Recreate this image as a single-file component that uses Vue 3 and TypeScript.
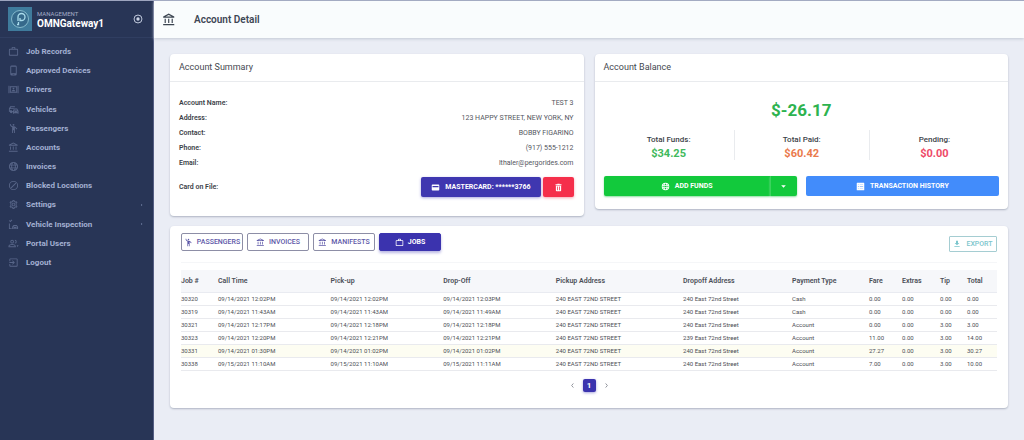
<script setup lang="ts">
interface NavItem {
  label: string
  icon: string
  expandable?: boolean
}

interface Job {
  id: string
  call: string
  pickup: string
  dropoff: string
  from: string
  to: string
  payment: string
  fare: string
  extras: string
  tip: string
  total: string
  active?: boolean
}

const icons = {
  bank: 'M6.500 10h-2v7h2v-7zM12.500 10h-2v7h2v-7zM21 19H2v2h19v-2zM18.500 10h-2v7h2v-7zM11.500 3.260L16.710 6H6.290l5.210-2.740M11.500 1L2 6v2h19V6l-9.500-5z',
  briefcase: 'M20 6h-4V4a2 2 0 0 0-2-2h-4a2 2 0 0 0-2 2v2H4a2 2 0 0 0-2 2v11a2 2 0 0 0 2 2h16a2 2 0 0 0 2-2V8a2 2 0 0 0-2-2zM10 4h4v2h-4V4zm10 15H4V8h16v11z',
  device: 'M16 1H8a3 3 0 0 0-3 3v16a3 3 0 0 0 3 3h8a3 3 0 0 0 3-3V4a3 3 0 0 0-3-3zm1 17H7V4h10v14zm-3 3h-4v-1h4v1z',
  drivers: 'M1 4h2v16H1V4zm20 0h2v16h-2V4zM4 5h16v14H4V5zm2 2v10h12V7H6zm6 1a2 2 0 1 1 0 4 2 2 0 0 1 0-4zm-4 8c0-2 2-3 4-3s4 1 4 3H8z',
  vehicles: 'M15 5H5L2 10v7h2a3 3 0 0 0 6 0h1v-2H9a3 3 0 0 0-5 0v-4h9V9H5l1.500-2H15V5zm5 5h-7l-2 5v6h2v-1h8v1h2v-6l-3-5zm-6 2h5l1 2h-7l1-2zm0 6a1 1 0 1 1 0-2 1 1 0 0 1 0 2zm6 0a1 1 0 1 1 0-2 1 1 0 0 1 0 2z',
  person: 'M12 2a2 2 0 1 0 0 4 2 2 0 0 0 0-4zM15.890 8.110C15.500 7.720 14.830 7 13.530 7H11C8.240 7 6 4.750 6 2H4c0 3.160 2.110 5.840 5 6.710V22h2v-6h2v6h2V10.050L18.950 14l1.410-1.410-4.470-4.480z',
  globe: 'M12 2a10 10 0 1 0 0 20 10 10 0 0 0 0-20zm0 2c1 0 2 2 2.500 4h-5C10 6 11 4 12 4zM8 5.500L7.300 8H5.500A8 8 0 0 1 8 5.500zm8 0A8 8 0 0 1 18.500 8h-1.800L16 5.500zM4.500 10H7v4H4.500a8 8 0 0 1 0-4zM9 10h6v4H9v-4zm8 0h2.500a8 8 0 0 1 0 4H17v-4zM5.500 16h1.800l.7 2.500A8 8 0 0 1 5.500 16zm4 0h5c-.5 2-1.500 4-2.500 4s-2-2-2.500-4zm7.200 0h1.800a8 8 0 0 1-2.500 2.500l.7-2.500z',
  blocked: 'M12 2a10 10 0 1 0 0 20 10 10 0 0 0 0-20zm0 2a8 8 0 1 1 0 16 8 8 0 0 1 0-16zM16.500 6L18 7.500 7.500 18 6 16.500 16.500 6z',
  gear: 'M12 8a4 4 0 1 0 0 8 4 4 0 0 0 0-8zm0 2a2 2 0 1 1 0 4 2 2 0 0 1 0-4zM10 2l-.5 2.700-1.600 1L5.300 4.700l-2 3.500 2.100 1.700v4.200l-2.100 1.700 2 3.500 2.600-1 1.600 1L10 22h4l.5-2.700 1.600-1 2.600 1 2-3.500-2.100-1.700V9.900l2.100-1.700-2-3.500-2.600 1-1.600-1L14 2h-4zm1.700 2h.6l.4 2.200L16 8l2-.7.3.500-1.700 1.400.4 2.800-.4 2.800 1.700 1.400-.3.500-2-.7-3.300 1.800-.4 2.200h-.6l-.4-2.200L8 16l-2 .7-.3-.5 1.700-1.400L7 12l.4-2.800-1.700-1.400.3-.5 2 .7 3.300-1.800.4-2.200z',
  inspection: 'M2 4l1.500-1.500L5 4l3-3 1.500 1.500L5 7 2 4zm0 6h2v10h4v2H2V10zm10 3h7l3 4v5h-2v-1h-9v1H9v-5l3-4zm1 2l-1 2h8l-1.500-2H13zm-1 5a1 1 0 1 0 0-2 1 1 0 0 0 0 2zm7 0a1 1 0 1 0 0-2 1 1 0 0 0 0 2z',
  users: 'M9 4a4 4 0 1 0 0 8 4 4 0 0 0 0-8zm0 2a2 2 0 1 1 0 4 2 2 0 0 1 0-4zm6-2v2a2 2 0 1 1 0 4v2a4 4 0 1 0 0-8zM9 13c-3 0-8 1.500-8 4.500V20h16v-2.500C17 14.500 12 13 9 13zm0 2c2.500 0 6 1.200 6 2.500v.5H3v-.5C3 16.200 6.500 15 9 15zm10 1h4l-2 4-2-4z',
  logout: 'M19 3H5a2 2 0 0 0-2 2v4h2V5h14v14H5v-4H3v4a2 2 0 0 0 2 2h14a2 2 0 0 0 2-2V5a2 2 0 0 0-2-2zm-9 4l-1 1.500 2.500 2.500H3v2h8.500L9 15.500l1 1.500 5-5-5-5z',
  card: 'M20 4H4a2 2 0 0 0-2 2v12a2 2 0 0 0 2 2h16a2 2 0 0 0 2-2V6a2 2 0 0 0-2-2zM4 11V8h16v3H4z',
  trash: 'M9 2v1H4v3h16V3h-5V2H9zM5 7v13a2 2 0 0 0 2 2h10a2 2 0 0 0 2-2V7H5zm3 2h2v10H8V9zm6 0h2v10h-2V9z',
  grid: 'M3 2h18a1 1 0 0 1 1 1v18a1 1 0 0 1-1 1H3a1 1 0 0 1-1-1V3a1 1 0 0 1 1-1zm2 5v1h3V7H5zm5 0v1h9V7h-9zm-5 5v1h3v-1H5zm5 0v1h9v-1h-9zm-5 5v1h3v-1H5zm5 0v1h9v-1h-9z',
  download: 'M9 2h6v7h4l-7 7-7-7h4V2zM4 19h16v2H4v-2z',
}

const nav: NavItem[] = [
  { label: 'Job Records', icon: icons.briefcase },
  { label: 'Approved Devices', icon: icons.device },
  { label: 'Drivers', icon: icons.drivers },
  { label: 'Vehicles', icon: icons.vehicles },
  { label: 'Passengers', icon: icons.person },
  { label: 'Accounts', icon: icons.bank },
  { label: 'Invoices', icon: icons.globe },
  { label: 'Blocked Locations', icon: icons.blocked },
  { label: 'Settings', icon: icons.gear, expandable: true },
  { label: 'Vehicle Inspection', icon: icons.inspection, expandable: true },
  { label: 'Portal Users', icon: icons.users },
  { label: 'Logout', icon: icons.logout },
]

const details = [
  { term: 'Account Name:', value: 'TEST 3' },
  { term: 'Address:', value: '123 HAPPY STREET, NEW YORK, NY' },
  { term: 'Contact:', value: 'BOBBY FIGARINO' },
  { term: 'Phone:', value: '(917) 555-1212' },
  { term: 'Email:', value: 'lthaler@pergorides.com' },
]

const totals = [
  { label: 'Total Funds:', value: '$34.25', tone: 'green' },
  { label: 'Total Paid:', value: '$60.42', tone: 'orange' },
  { label: 'Pending:', value: '$0.00', tone: 'red' },
]

const tabs = [
  { label: 'PASSENGERS', icon: icons.person },
  { label: 'INVOICES', icon: icons.bank },
  { label: 'MANIFESTS', icon: icons.bank },
  { label: 'JOBS', icon: icons.briefcase, active: true },
]

const columns = [
  { label: 'Job #', size: 'c-id' },
  { label: 'Call Time', size: 'c-time' },
  { label: 'Pick-up', size: 'c-time' },
  { label: 'Drop-Off', size: 'c-time' },
  { label: 'Pickup Address', size: 'c-from' },
  { label: 'Dropoff Address', size: 'c-to' },
  { label: 'Payment Type', size: 'c-pay' },
  { label: 'Fare', size: 'c-fare' },
  { label: 'Extras', size: 'c-extras' },
  { label: 'Tip', size: 'c-tip' },
  { label: 'Total', size: 'c-total' },
]

const street = '240 EAST 72ND STREET'
const jobs: Job[] = [
  { id: '30320', call: '09/14/2021 12:02PM', pickup: '09/14/2021 12:02PM', dropoff: '09/14/2021 12:03PM', from: street, to: '240 East 72nd Street', payment: 'Cash', fare: '0.00', extras: '0.00', tip: '0.00', total: '0.00' },
  { id: '30319', call: '09/14/2021 11:43AM', pickup: '09/14/2021 11:43AM', dropoff: '09/14/2021 11:49AM', from: street, to: '240 East 72nd Street', payment: 'Cash', fare: '0.00', extras: '0.00', tip: '0.00', total: '0.00' },
  { id: '30321', call: '09/14/2021 12:17PM', pickup: '09/14/2021 12:18PM', dropoff: '09/14/2021 12:18PM', from: street, to: '240 East 72nd Street', payment: 'Account', fare: '0.00', extras: '0.00', tip: '3.00', total: '3.00' },
  { id: '30323', call: '09/14/2021 12:20PM', pickup: '09/14/2021 12:21PM', dropoff: '09/14/2021 12:21PM', from: street, to: '239 East 72nd Street', payment: 'Account', fare: '11.00', extras: '0.00', tip: '3.00', total: '14.00' },
  { id: '30331', call: '09/14/2021 01:30PM', pickup: '09/14/2021 01:02PM', dropoff: '09/14/2021 01:02PM', from: street, to: '240 East 72nd Street', payment: 'Account', fare: '27.27', extras: '0.00', tip: '3.00', total: '30.27', active: true },
  { id: '30338', call: '09/15/2021 11:10AM', pickup: '09/15/2021 11:10AM', dropoff: '09/15/2021 11:11AM', from: street, to: '240 East 72nd Street', payment: 'Account', fare: '7.00', extras: '0.00', tip: '3.00', total: '10.00' },
]
</script>

<template>
  <div class="app">
    <aside class="sidebar">
      <div class="brand">
        <svg class="logo" viewBox="0 0 24 24" aria-hidden="true">
          <rect width="24" height="24" fill="#3f7b9c" />
          <circle cx="12" cy="12" r="8.500" fill="#35698b" stroke="#84b9cc" stroke-width="1" />
          <path d="M10 14V10a3.500 3.500 0 1 1 3.500 3.500H12V11M9 17.500h1.500V15" fill="none" stroke="#a9dcec" stroke-width="1.300" />
        </svg>
        <div class="brand-text">
          <span class="brand-over">MANAGEMENT</span>
          <span class="brand-name">OMNGateway1</span>
        </div>
        <button class="pin" type="button" aria-label="Collapse menu">
          <svg viewBox="0 0 24 24">
            <circle cx="12" cy="12" r="9.500" fill="none" stroke="currentColor" stroke-width="2.200" />
            <circle cx="12" cy="12" r="4" fill="currentColor" />
          </svg>
        </button>
      </div>
      <nav>
        <a v-for="item in nav" :key="item.label" href="#" class="nav-item">
          <svg class="nav-icon" viewBox="0 0 24 24"><path :d="item.icon" fill-rule="evenodd" /></svg>
          <span>{{ item.label }}</span>
          <svg v-if="item.expandable" class="nav-more" viewBox="0 0 4 4"><path d="M1 1l1.500 1L1 3z" /></svg>
        </a>
      </nav>
    </aside>

    <div class="page">
      <header class="topbar">
        <svg class="top-icon" viewBox="0 0 24 24"><path :d="icons.bank" fill-rule="evenodd" /></svg>
        <h1>Account Detail</h1>
      </header>

      <main>
        <div class="cards">
          <section class="card">
            <h2>Account Summary</h2>
            <dl class="details">
              <div v-for="row in details" :key="row.term" class="detail">
                <dt>{{ row.term }}</dt>
                <dd>{{ row.value }}</dd>
              </div>
              <div class="detail card-file">
                <dt>Card on File:</dt>
                <dd class="file-actions">
                  <button class="btn primary" type="button">
                    <svg viewBox="0 0 24 24"><path :d="icons.card" fill-rule="evenodd" /></svg>
                    MASTERCARD: ******3766
                  </button>
                  <button class="btn danger" type="button" aria-label="Delete card">
                    <svg viewBox="0 0 24 24"><path :d="icons.trash" fill-rule="evenodd" /></svg>
                  </button>
                </dd>
              </div>
            </dl>
          </section>

          <section class="card">
            <h2>Account Balance</h2>
            <div class="balance">
              <p class="amount">$-26.17</p>
              <div class="totals">
                <div v-for="t in totals" :key="t.label" class="total">
                  <span class="total-label">{{ t.label }}</span>
                  <strong :class="t.tone">{{ t.value }}</strong>
                </div>
              </div>
              <div class="balance-actions">
                <div class="split">
                  <button class="btn success grow" type="button">
                    <svg viewBox="0 0 24 24"><path :d="icons.globe" fill-rule="evenodd" /></svg>
                    ADD FUNDS
                  </button>
                  <button class="btn success caret" type="button" aria-label="More funding options">
                    <svg viewBox="0 0 24 24"><path d="M1 6h22L12 18z" /></svg>
                  </button>
                </div>
                <button class="btn info" type="button">
                  <svg viewBox="0 0 24 24"><path :d="icons.grid" fill-rule="evenodd" /></svg>
                  TRANSACTION HISTORY
                </button>
              </div>
            </div>
          </section>
        </div>

        <section class="card records">
          <div class="toolbar">
            <div class="tabs">
              <button v-for="tab in tabs" :key="tab.label" type="button" class="tab" :class="{ active: tab.active }">
                <svg viewBox="0 0 24 24"><path :d="tab.icon" fill-rule="evenodd" /></svg>
                {{ tab.label }}
              </button>
            </div>
            <button class="export" type="button">
              <svg viewBox="0 0 24 24"><path :d="icons.download" /></svg>
              EXPORT
            </button>
          </div>
          <table>
            <thead>
              <tr>
                <th v-for="col in columns" :key="col.label" :class="col.size" scope="col">{{ col.label }}</th>
              </tr>
            </thead>
            <tbody>
              <tr v-for="job in jobs" :key="job.id" :class="{ highlighted: job.active }">
                <td>{{ job.id }}</td>
                <td>{{ job.call }}</td>
                <td>{{ job.pickup }}</td>
                <td>{{ job.dropoff }}</td>
                <td>{{ job.from }}</td>
                <td>{{ job.to }}</td>
                <td>{{ job.payment }}</td>
                <td>{{ job.fare }}</td>
                <td>{{ job.extras }}</td>
                <td>{{ job.tip }}</td>
                <td>{{ job.total }}</td>
              </tr>
            </tbody>
          </table>
          <div class="pager">
            <button type="button" aria-label="Previous page">
              <svg viewBox="0 0 24 24"><path d="M15 5l-6 7 6 7" /></svg>
            </button>
            <button type="button" class="current">1</button>
            <button type="button" aria-label="Next page">
              <svg viewBox="0 0 24 24"><path d="M9 5l6 7-6 7" /></svg>
            </button>
          </div>
        </section>
      </main>
    </div>
  </div>
</template>

<style>
body {
  margin: 0;
  background: #eaedf5;
}
</style>

<style scoped>
.app {
  box-sizing: border-box;
  display: flex;
  min-height: 100vh;
  border-top: 1px solid #9da5bf;
  font-family: Roboto, "Liberation Sans", sans-serif;
  font-size: 7px;
  color: #3c3f48;
}
.app *, .app *::before {
  box-sizing: border-box;
}
button {
  margin: 0;
  padding: 0;
  border: 0;
  background: none;
  font: inherit;
  color: inherit;
  display: flex;
  align-items: center;
  justify-content: center;
}
svg {
  fill: currentColor;
  flex: none;
}
h1, h2, p, dl, dd {
  margin: 0;
}
.sidebar {
  flex: none;
  width: 154px;
  background: #283556;
  border-right: 1px solid #555e83;
}
.brand {
  display: flex;
  align-items: center;
  gap: 5px;
  height: 37px;
  padding: 0 10px 0 8px;
  border-bottom: 1px solid #303e61;
}
.logo {
  width: 24px;
  height: 24px;
}
.brand-text {
  display: flex;
  flex-direction: column;
  flex: 1;
  padding-top: 2px;
}
.brand-over {
  font-size: 6px;
  line-height: 8px;
  color: #a3acc6;
}
.brand-name {
  font-size: 10px;
  line-height: 12px;
  font-weight: 700;
  color: #fff;
}
.pin {
  color: #ccd4e6;
}
.pin svg {
  width: 10px;
  height: 10px;
}
nav {
  display: grid;
  grid-auto-rows: 1fr;
  height: 230px;
  margin-top: 4px;
}
.nav-item {
  display: flex;
  align-items: center;
  gap: 7px;
  padding: 0 9px 0 8px;
  font-size: 8px;
  font-weight: 700;
  color: #a3b0d2;
  text-decoration: none;
}
.nav-icon {
  width: 11px;
  height: 11px;
  fill: #586689;
}
.nav-more {
  width: 4px;
  height: 4px;
  margin-left: auto;
  fill: #7482a6;
}
.page {
  flex: 1;
  min-width: 0;
}
.topbar {
  display: flex;
  align-items: center;
  gap: 18px;
  height: 37px;
  padding: 0 8px;
  background: #f9fcfd;
  box-shadow: 0 1px 3px #c3c8d4;
}
.top-icon {
  width: 14px;
  height: 14px;
  fill: #3b4450;
}
h1 {
  font-size: 10px;
  font-weight: 600;
  color: #3d4654;
}
main {
  padding: 16px 16px 0;
}
.cards {
  display: grid;
  grid-template-columns: 1fr 1fr;
  align-items: start;
  gap: 11px;
}
.card {
  background: #fff;
  border-radius: 4px;
  box-shadow: 0 1px 2px #aeb4c2;
}
h2 {
  height: 28px;
  padding: 0 9px;
  border-bottom: 1px solid #e9ebee;
  font-size: 9px;
  line-height: 27px;
  font-weight: 400;
  color: #454850;
}
.details {
  padding: 13px 10px 19px 9px;
}
.detail {
  display: flex;
  align-items: center;
  justify-content: space-between;
  height: 15px;
}
dt {
  font-weight: 600;
}
dd {
  color: #54565e;
}
.card-file {
  height: 20px;
  margin-top: 7px;
}
.file-actions {
  display: flex;
  gap: 2px;
}
.btn {
  gap: 5px;
  height: 20px;
  border-radius: 2px;
  font-weight: 700;
  color: #fff;
}
.btn svg {
  width: 9px;
  height: 9px;
}
.primary {
  padding: 0 10px;
  background: #3f37b0;
  box-shadow: 0 1px 3px #a9a6dd;
}
.danger {
  width: 31px;
  background: #f52f4b;
  box-shadow: 0 1px 3px #f6a5b0;
}
.balance {
  padding: 17px 9px 13px;
}
.amount {
  font-size: 17px;
  line-height: 22px;
  font-weight: 700;
  text-align: center;
  color: #2db34f;
}
.totals {
  display: grid;
  grid-template-columns: 26fr 27fr 26fr;
  margin-top: 9px;
}
.total {
  display: flex;
  flex-direction: column;
  align-items: center;
  height: 30px;
  padding-top: 4px;
}
.total + .total {
  border-left: 1px solid #e9ebee;
}
.total-label {
  font-size: 8px;
  line-height: 12px;
  font-weight: 500;
}
.total strong {
  font-size: 11px;
  line-height: 15px;
}
.green {
  color: #3fb95c;
}
.orange {
  color: #ea7a4c;
}
.red {
  color: #ee4a68;
}
.balance-actions {
  display: grid;
  grid-template-columns: 1fr 1fr;
  gap: 9px;
  margin-top: 16px;
}
.split {
  display: flex;
}
.grow {
  flex: 1;
  border-radius: 2px 0 0 2px;
}
.success {
  background: #12c93c;
  box-shadow: 0 1px 2px #8ddca0;
}
.caret {
  width: 27px;
  border-left: 1px solid #3bd35d;
  border-radius: 0 2px 2px 0;
}
.caret svg {
  width: 5px;
  height: 5px;
}
.info {
  background: #428cfb;
}
.records {
  margin-top: 10px;
  padding: 7px 11px 16px;
}
.toolbar {
  display: flex;
  justify-content: space-between;
  align-items: flex-start;
  height: 30px;
  border-bottom: 1px solid #f5f6f8;
}
.tabs {
  display: flex;
  gap: 4px;
}
.tab {
  gap: 4px;
  width: 62px;
  height: 18px;
  border: 1px solid #8d8ea6;
  border-radius: 2px;
  font-weight: 500;
  color: #5d58a8;
}
.tab svg {
  width: 9px;
  height: 9px;
}
.tab.active {
  border-color: #3b33ae;
  background: #3b33ae;
  box-shadow: 0 2px 3px #b9b6e3;
  font-weight: 700;
  color: #fff;
}
.export {
  gap: 5px;
  width: 48px;
  height: 16px;
  margin-top: 3px;
  border: 1px solid #a5cdd2;
  border-radius: 1px;
  font-weight: 500;
  color: #7cc6cd;
}
.export svg {
  width: 8px;
  height: 8px;
}
table {
  width: 100%;
  margin-top: 7px;
  border-collapse: collapse;
  table-layout: fixed;
  white-space: nowrap;
}
th {
  height: 22px;
  padding: 1px 0 0;
  background: #f6f7fa;
  border-bottom: 1px solid #e9ebf1;
  text-align: left;
  font-weight: 600;
  color: #4c4f58;
}
td {
  height: 13px;
  padding: 0;
  font-size: 6px;
  line-height: 12px;
  border-bottom: 1px solid #e9eaee;
  color: #4c4e55;
}
.highlighted td {
  background: #fdfdf2;
}
.c-id { width: 37px; }
.c-time { width: 13.8%; }
.c-from { width: 15.6%; }
.c-pay { width: 77px; }
.c-fare { width: 33px; }
.c-extras { width: 38px; }
.c-tip { width: 27px; }
.c-total { width: 30px; }
.pager {
  display: flex;
  justify-content: center;
  gap: 4px;
  margin-top: 8px;
}
.pager button {
  width: 13px;
  height: 13px;
  border-radius: 2px;
}
.pager svg {
  width: 7px;
  height: 7px;
  fill: none;
  stroke: #858891;
  stroke-width: 3;
}
.pager .current {
  background: #3b33ae;
  box-shadow: 0 1px 3px #a9a6dd;
  font-size: 8px;
  font-weight: 700;
  color: #fff;
}
</style>
